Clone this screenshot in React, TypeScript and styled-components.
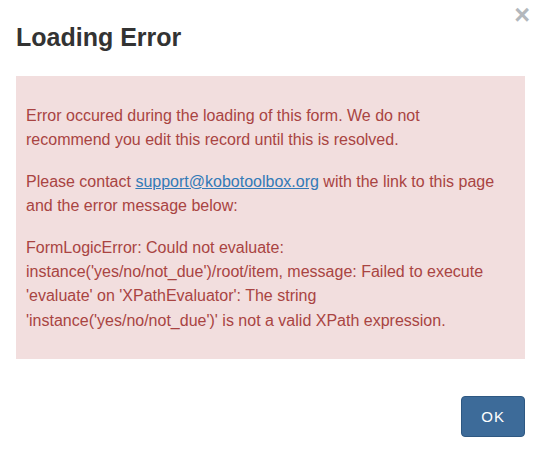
import styled, { createGlobalStyle } from "styled-components";

const GlobalStyle = createGlobalStyle`
  html, body {
    margin: 0;
    padding: 0;
    background: #fff;
  }
  body {
    font-family: "Liberation Sans", Arial, sans-serif;
  }
`;

const Dialog = styled.div`
  width: 542px;
  height: 453px;
  box-sizing: border-box;
  display: flex;
  flex-direction: column;
  background: #fff;
`;

const Header = styled.div`
  display: flex;
  justify-content: space-between;
  align-items: flex-start;
  padding: 0 12px 0 16px;
`;

const Title = styled.h1`
  margin: 24px 0 0;
  font-size: 25px;
  line-height: 1.1;
  font-weight: 700;
  color: #333;
`;

const Close = styled.button`
  margin-top: 2px;
  padding: 0;
  border: 0;
  background: none;
  font-family: "Liberation Sans", Arial, sans-serif;
  font-size: 27px;
  font-weight: 700;
  line-height: 1;
  color: #b3b8bd;
  cursor: pointer;
`;

const Alert = styled.div`
  margin: 24px 17px 0 16px;
  padding: 28px 25px 26px 10px;
  background: #f2dede;
  color: #a94442;
  font-size: 16px;
  line-height: 24.3px;

  p {
    margin: 0 0 17.5px;
  }
  p:last-child {
    margin-bottom: 0;
  }
  a {
    color: #337ab7;
    text-decoration: underline;
  }
`;

const Footer = styled.div`
  display: flex;
  justify-content: flex-end;
  padding: 37px 17px 0 0;
`;

const OkButton = styled.button`
  height: 41px;
  padding: 0 19px;
  border: 1px solid #2e5882;
  border-radius: 4px;
  background: #3d6b99;
  color: #fff;
  font-family: "Liberation Sans", Arial, sans-serif;
  font-size: 15px;
  letter-spacing: 1px;
  cursor: pointer;
`;

export default function App() {
  return (
    <>
      <GlobalStyle />
      <Dialog>
        <Header>
          <Title>Loading Error</Title>
          <Close aria-label="Close">×</Close>
        </Header>
        <Alert>
          <p>
            Error occured during the loading of this form. We do not recommend
            you edit this record until this is resolved.
          </p>
          <p>
            Please contact <a href="#">support@kobotoolbox.org</a> with the link
            to this page and the error message below:
          </p>
          <p>
            FormLogicError: Could not evaluate:
            instance('yes/no/not_due')/root/item, message: Failed to execute
            'evaluate' on 'XPathEvaluator': The string
            'instance('yes/no/not_due')' is not a valid XPath expression.
          </p>
        </Alert>
        <Footer>
          <OkButton>OK</OkButton>
        </Footer>
      </Dialog>
    </>
  );
}
